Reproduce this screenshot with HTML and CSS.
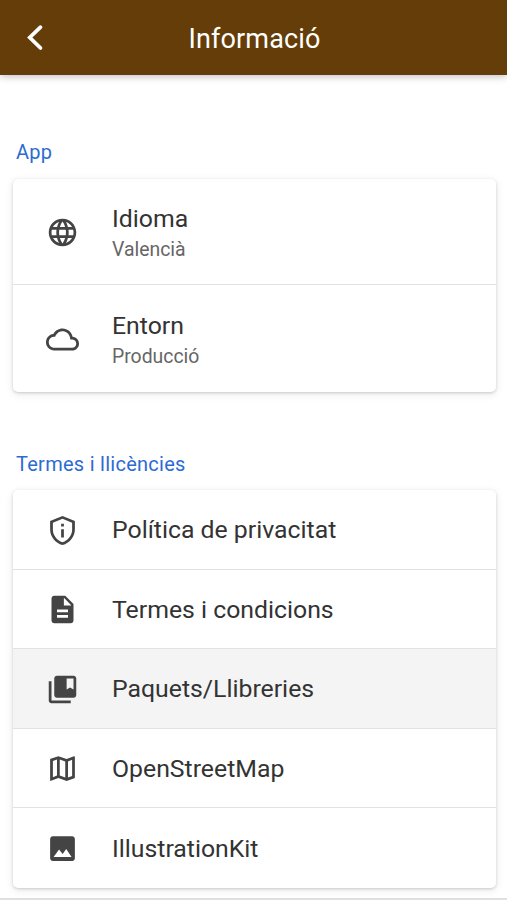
FILE: index.html
```html
<!DOCTYPE html>
<html lang="ca">
<head>
    <meta charset="UTF-8">
    <meta name="viewport" content="width=device-width, initial-scale=1.0">
    <title>Informació</title>
    <link rel="stylesheet" href="styles.css">
</head>
<body>
    <header class="toolbar">
        <button class="back" aria-label="Arrere">
            <svg viewBox="0 0 20 28"><path d="M15.5 3.2 4.8 13.5l10.700 10.5"/></svg>
        </button>
        <h1>Informació</h1>
    </header>

    <main class="content">
        <h2 class="section-title">App</h2>
        <ul class="card card-app">
            <li class="item item-tall">
                <svg class="icon" viewBox="0 0 24 24"><path d="M11.99 2C6.47 2 2 6.48 2 12s4.47 10 9.99 10C17.52 22 22 17.52 22 12S17.52 2 11.99 2zm6.93 6h-2.95c-.32-1.25-.78-2.45-1.38-3.56 1.84.63 3.37 1.91 4.33 3.56zM12 4.04c.83 1.2 1.48 2.53 1.91 3.96h-3.82c.43-1.43 1.08-2.76 1.91-3.96zM4.26 14C4.1 13.36 4 12.69 4 12s.1-1.36.26-2h3.38c-.08.66-.14 1.32-.14 2s.06 1.34.14 2H4.26zm.82 2h2.95c.32 1.25.78 2.45 1.38 3.56-1.84-.63-3.37-1.9-4.33-3.56zm2.95-8H5.08c.96-1.66 2.49-2.93 4.33-3.56C8.81 5.55 8.35 6.75 8.03 8zM12 19.96c-.83-1.2-1.48-2.53-1.91-3.96h3.82c-.43 1.43-1.08 2.76-1.91 3.96zM14.34 14H9.66c-.09-.66-.16-1.32-.16-2s.07-1.35.16-2h4.68c.09.65.16 1.32.16 2s-.07 1.34-.16 2zm.25 5.56c.6-1.11 1.06-2.31 1.38-3.56h2.95c-.96 1.65-2.49 2.93-4.33 3.56zM16.36 14c.08-.66.14-1.32.14-2s-.06-1.34-.14-2h3.38c.16.64.26 1.31.26 2s-.1 1.36-.26 2h-3.38z"/></svg>
                <div class="label">
                    <h3>Idioma</h3>
                    <p>Valencià</p>
                </div>
            </li>
            <li class="item item-tall">
                <svg class="icon" viewBox="0 0 24 24"><path d="M19.35 10.04C18.67 6.59 15.64 4 12 4 9.11 4 6.6 5.64 5.35 8.04 2.34 8.36 0 10.91 0 14c0 3.31 2.69 6 6 6h13c2.76 0 5-2.24 5-5 0-2.64-2.05-4.78-4.65-4.96zM19 18H6c-2.21 0-4-1.79-4-4 0-2.05 1.53-3.76 3.56-3.97l1.07-.11.5-.95C8.08 7.14 9.94 6 12 6c2.62 0 4.88 1.86 5.39 4.43l.3 1.5 1.53.11c1.56.1 2.78 1.41 2.78 2.96 0 1.65-1.35 3-3 3z"/></svg>
                <div class="label">
                    <h3>Entorn</h3>
                    <p>Producció</p>
                </div>
            </li>
        </ul>

        <h2 class="section-title">Termes i llicències</h2>
        <ul class="card">
            <li class="item">
                <svg class="icon" viewBox="0 0 24 24"><path d="M12 1.4 3 5v6.2c0 5.2 3.8 9.9 9 11.4 5.2-1.5 9-6.2 9-11.4V5l-9-3.6zm7 9.8c0 4.2-2.9 7.9-7 9.3-4.1-1.4-7-5.1-7-9.3V6.3l7-2.8 7 2.8v4.9zM11 11h2v6h-2zm0-4h2v2h-2z"/></svg>
                <h3>Política de privacitat</h3>
            </li>
            <li class="item">
                <svg class="icon" viewBox="0 0 24 24"><path d="M14 2H6c-1.1 0-1.99.9-1.99 2L4 20c0 1.1.89 2 1.99 2H18c1.1 0 2-.9 2-2V8l-6-6zm2 16H8v-2h8v2zm0-4H8v-2h8v2zm-3-5V3.5L18.5 9H13z"/></svg>
                <h3>Termes i condicions</h3>
            </li>
            <li class="item item-active">
                <svg class="icon" viewBox="0 0 24 24"><path d="M4 6H2v14c0 1.1.9 2 2 2h14v-2H4V6z"/><path d="M20 2H8c-1.1 0-2 .9-2 2v12c0 1.1.9 2 2 2h12c1.1 0 2-.9 2-2V4c0-1.1-.9-2-2-2zm0 10-2.5-1.5L15 12V4h5v8z"/></svg>
                <h3>Paquets/Llibreries</h3>
            </li>
            <li class="item">
                <svg class="icon" viewBox="0 0 24 24"><path d="m20.5 3-.16.03L15 5.1 9 3 3.36 4.9c-.21.07-.36.25-.36.48V20.5c0 .28.22.5.5.5l.16-.03L9 18.9l6 2.1 5.64-1.9c.21-.07.36-.25.36-.48V3.5c0-.28-.22-.5-.5-.5zM10 5.47l4 1.4v11.66l-4-1.4V5.47zm-5 .99 3-1.01v11.7l-3 1.16V6.46zm14 11.08-3 1.01V6.86l3-1.16v11.84z"/></svg>
                <h3>OpenStreetMap</h3>
            </li>
            <li class="item">
                <svg class="icon" viewBox="0 0 24 24"><path d="M21 19V5c0-1.1-.9-2-2-2H5c-1.1 0-2 .9-2 2v14c0 1.1.9 2 2 2h14c1.1 0 2-.9 2-2zM5.5 18.200l4-5.400 2.600 3.200 2.600-3.600 3.900 5.800H5.500z"/></svg>
                <h3>IllustrationKit</h3>
            </li>
        </ul>
    </main>
    <footer class="tab-bar"></footer>
</body>
</html>
```
FILE: styles.css
```css
* {
    box-sizing: border-box;
    margin: 0;
    padding: 0;
}
body {
    display: flex;
    flex-direction: column;
    height: 100vh;
    overflow: hidden;
    background: #fff;
    color: #333;
    font-family: Roboto, "Liberation Sans", sans-serif;
}
.toolbar {
    display: grid;
    grid-template-columns: 70px 1fr 70px;
    align-items: center;
    flex: none;
    height: 75px;
    background: #643d08;
    color: #fff;
    box-shadow: 0 1px 8px rgba(0, 0, 0, 0.28);
}
.toolbar h1 {
    padding: 2px 0 0 2px;
    font-size: 27px;
    font-weight: 400;
    letter-spacing: 0.15px;
    text-align: center;
}
.back {
    justify-self: center;
    height: 28px;
    border: none;
    background: none;
}
.back svg {
    display: block;
    width: 20px;
    height: 28px;
    fill: none;
    stroke: #fff;
    stroke-width: 3.8;
    stroke-linecap: round;
}
.content {
    flex: 1;
    min-height: 0;
    padding: 65px 11px 0 13px;
}
.section-title {
    padding-left: 3px;
    color: #2d6bd3;
    font-size: 20px;
    font-weight: 400;
    letter-spacing: 0.27px;
    line-height: 24px;
}
.card {
    margin-top: 14.5px;
    border-radius: 5px;
    background: #fff;
    box-shadow: 0 1px 3px rgba(0, 0, 0, 0.16), 0 2px 10px rgba(0, 0, 0, 0.09);
    overflow: hidden;
    list-style: none;
}
.card-app {
    margin-bottom: 60px;
}
.item {
    display: flex;
    align-items: center;
    gap: 33px;
    height: 79.5px;
    padding: 2px 0 0 33px;
    border-bottom: 1.5px solid #e2e2e2;
}
.item-tall {
    height: 106.5px;
}
.item:last-child {
    border-bottom: none;
}
.item-active {
    background: #f4f4f4;
}
.item h3 {
    font-size: 24.8px;
    font-weight: 400;
    line-height: 32px;
}
.item p {
    color: #666;
    font-size: 19.4px;
    line-height: 29px;
}
.label {
    padding-top: 2px;
}
.icon {
    flex: none;
    width: 33px;
    height: 33px;
    fill: #444;
}
.tab-bar {
    flex: none;
    height: 2px;
    background: #e0e0e0;
}
```
